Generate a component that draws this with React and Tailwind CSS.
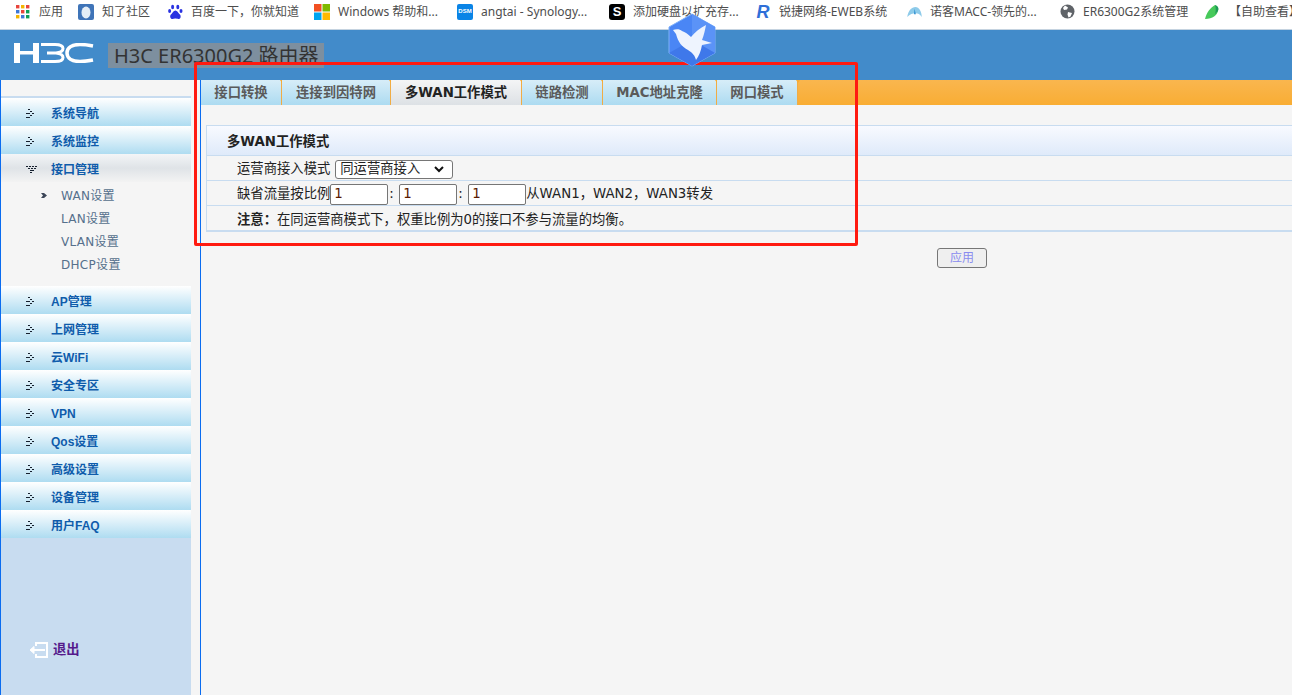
const cn = '"Liberation Sans", "Noto Sans CJK SC", sans-serif'
const wide = '"DejaVu Sans", "Noto Sans CJK SC", sans-serif'
const latin = '"Noto Sans", "Noto Sans CJK SC", sans-serif'

const closedDots = [[2, 0], [4, 2], [0, 4], [2, 4], [6, 4], [4, 6], [2, 8], [0, 8]]
const openDots = [[0, 1], [3, 1], [6, 1], [9, 1], [2, 3], [5, 3], [8, 3], [4, 5], [6, 5], [4, 7]]

function Dots({ open }) {
  const dots = open ? openDots : closedDots
  return (
    <svg width="11" height="10" viewBox="0 0 11 10" className="shrink-0" shapeRendering="crispEdges">
      {dots.map(([x, y], i) => (
        <rect key={i} x={x} y={y} width="2" height="1" fill="#16202e" />
      ))}
    </svg>
  )
}

function NavItem({ label, open }) {
  return (
    <div
      className={`flex h-[28px] items-center pl-[25px] pt-[4px] ${
        open
          ? "bg-gradient-to-b from-[#f3f5f7] via-[#dfe3e7] to-[#f3f3f3]"
          : "bg-gradient-to-b from-[#ffffff] to-[#aedcf1]"
      }`}
    >
      <Dots open={open} />
      <span className="ml-[14px] text-[12px] font-bold text-[#0f5cab]">{label}</span>
    </div>
  )
}

function Bookmark({ icon, label, w }) {
  return (
    <div className="flex shrink-0 items-center gap-[8px]" style={{ width: w }}>
      <div className="flex h-[16px] w-[16px] shrink-0 items-center justify-center">{icon}</div>
      <span className="whitespace-nowrap text-[12px] text-[#4d4d4d]" style={{ fontFamily: latin }}>
        {label}
      </span>
    </div>
  )
}

function GridIcon() {
  const colors = ["#e8453c", "#f4b400", "#e8453c", "#3c78d8", "#e8453c", "#0f9d58", "#f4b400", "#3c78d8", "#0f9d58"]
  return (
    <svg width="14" height="14" viewBox="0 0 14 14">
      {colors.map((c, i) => (
        <rect key={i} x={(i % 3) * 5} y={Math.floor(i / 3) * 5} width="3.4" height="3.4" fill={c} />
      ))}
    </svg>
  )
}

function BookmarkBar() {
  return (
    <div className="flex h-[30px] shrink-0 items-center border-b border-[#c5d3e0] bg-white pb-[6px] pl-[15px]">
      <Bookmark w={63} icon={<GridIcon />} label="应用" />
      <Bookmark
        w={89}
        label="知了社区"
        icon={
          <svg width="16" height="16" viewBox="0 0 16 16">
            <rect width="16" height="16" rx="2" fill="#3f74b8" />
            <ellipse cx="8" cy="8.5" rx="4.5" ry="6" fill="#e6eef6" />
          </svg>
        }
      />
      <Bookmark
        w={147}
        label="百度一下，你就知道"
        icon={
          <svg width="15" height="16" viewBox="0 0 15 16" fill="#2932e1">
            <ellipse cx="4.6" cy="3" rx="1.5" ry="2.3" />
            <ellipse cx="9.8" cy="3" rx="1.5" ry="2.3" />
            <ellipse cx="1.6" cy="7" rx="1.5" ry="2" />
            <ellipse cx="13" cy="7" rx="1.5" ry="2" />
            <path d="M7.4 6.5c-2 0-2.5 2.4-4.2 3.7C1.500 11.500 2 15 4.600 15c1.200 0 1.800-.4 2.800-.4s1.700.4 3 .4c2.500 0 3-3.400 1.200-4.800C9.900 8.900 9.400 6.500 7.400 6.500z" />
          </svg>
        }
      />
      <Bookmark
        w={143}
        label="Windows 帮助和..."
        icon={
          <svg width="16" height="16" viewBox="0 0 16 16">
            <rect width="7.5" height="7.5" fill="#f25022" />
            <rect x="8.5" width="7.5" height="7.5" fill="#7fba00" />
            <rect y="8.5" width="7.5" height="7.5" fill="#00a4ef" />
            <rect x="8.5" y="8.5" width="7.5" height="7.5" fill="#ffb900" />
          </svg>
        }
      />
      <Bookmark
        w={152}
        label="angtai - Synology..."
        icon={
          <div className="flex h-[16px] w-[16px] items-center justify-center rounded-[2px] bg-[#0a84e6] text-[6px] font-bold text-white">
            DSM
          </div>
        }
      />
      <Bookmark
        w={146}
        label="添加硬盘以扩充存..."
        icon={
          <div className="flex h-[16px] w-[16px] items-center justify-center rounded-[3px] bg-black text-[13px] font-bold text-white">
            S
          </div>
        }
      />
      <Bookmark
        w={151}
        label="锐捷网络-EWEB系统"
        icon={<span className="text-[18px] font-black italic leading-none text-[#2f6fd8]">R</span>}
      />
      <Bookmark
        w={153}
        label="诺客MACC-领先的..."
        icon={
          <svg width="15" height="10" viewBox="0 0 16 11">
            <path d="M0 11C1 4 5 0 9 0s7 5 7 11c-2-3-4-4-7-4s-6 1-9 4z" fill="#8ecbea" />
            <path d="M8 2l1.500 6h-2z" fill="#2f8fd0" />
          </svg>
        }
      />
      <Bookmark
        w={146}
        label="ER6300G2系统管理"
        icon={
          <svg width="15" height="15" viewBox="0 0 15 15">
            <circle cx="7.5" cy="7.5" r="7" fill="#5f6368" />
            <path d="M5 1.500l3 2-1 2-3 .5-1-2zM8 8l4 1-1.500 3.500-2 1-1-3z" fill="#fff" />
          </svg>
        }
      />
      <Bookmark
        w={100}
        label="【自助查看】"
        icon={
          <svg width="16" height="16" viewBox="0 0 16 16">
            <path d="M0 15C2 8 5 4 10 1c3 1 4 3 3 6-1 4-5 8-13 8z" fill="#46c95a" />
            <path d="M10 1c3 1 4 3 3 6l-3 3c1-3 1-6 0-9z" fill="#1f9a58" />
          </svg>
        }
      />
    </div>
  )
}

function H3CLogo() {
  return (
    <svg width="81" height="20" viewBox="0 0 81 20" className="mb-[5px] shrink-0" fill="#fff">
      <rect x="1" y="0" width="6" height="20" />
      <rect x="20" y="0" width="6" height="20" />
      <rect x="7" y="8" width="13" height="3.500" />
      <path
        fill="none"
        stroke="#fff"
        strokeWidth="3"
        d="M28 1.500h14c6 0 8 1.500 8 4s-2 4-7 4.500M34 10h9c5 .5 7 2 7 4.500s-2 4-8 4H28"
      />
      <path
        fill="none"
        stroke="#fff"
        strokeWidth="3.500"
        d="M80 3c-5-1-9-1.500-13-1.500-8 0-13 3-13 8.500s5 8.500 13 8.500c4 0 8-.5 13-1.500"
      />
    </svg>
  )
}

function HeaderBar() {
  return (
    <div className="flex h-[50px] shrink-0 items-center bg-[#428bca] pl-[13px]">
      <H3CLogo />
      <div
        className="ml-[14px] mt-[1px] flex h-[25px] w-[216px] items-center bg-[#7d8f9f] pl-[6px] text-[20px] leading-none whitespace-nowrap text-[#333]"
        style={{ fontFamily: latin }}
      >
        H3C ER6300G2 路由器
      </div>
    </div>
  )
}

const navTop = ["系统导航", "系统监控"]
const navBottom = ["AP管理", "上网管理", "云WiFi", "安全专区", "VPN", "Qos设置", "高级设置", "设备管理", "用户FAQ"]
const subItems = ["WAN设置", "LAN设置", "VLAN设置", "DHCP设置"]

function Sidebar() {
  return (
    <div className="flex w-[191px] shrink-0 flex-col border-l border-[#0a6cf0]">
      <div className="h-[16px] shrink-0" />
      <div className="h-[2px] shrink-0 bg-[#c8dcf0]" />
      {navTop.map((n) => (
        <NavItem key={n} label={n} />
      ))}
      <NavItem label="接口管理" open />
      <div className="flex h-[104px] shrink-0 flex-col pt-[2px]">
        {subItems.map((s, i) => (
          <div key={s} className="flex h-[23px] items-center">
            <div className="flex w-[60px] justify-end pr-[13px]">
              {i === 0 && (
                <svg width="7" height="7" viewBox="0 0 7 7">
                  <path d="M0 1h3l3 2.500-3 2.500H0l2-2.500z" fill="#3c4658" />
                </svg>
              )}
            </div>
            <span className="text-[12px] tracking-[0.3px] text-[#56708c]" style={{ fontFamily: wide }}>
              {s}
            </span>
          </div>
        ))}
      </div>
      {navBottom.map((n) => (
        <NavItem key={n} label={n} />
      ))}
      <div className="flex-1 bg-[#c8dcf0] pl-[28px] pt-[102px]">
        <div className="flex items-center gap-[4px]">
          <svg width="20" height="16" viewBox="0 0 20 16" fill="none" stroke="#fff" strokeWidth="2">
            <path d="M7 4V1h11v14H7v-3" />
            <path d="M16 8H5" />
            <path d="M5 4.500v7L1 8z" fill="#fff" strokeWidth="1" />
          </svg>
          <span className="text-[13.33px] font-bold text-[#551a8b]">退出</span>
        </div>
      </div>
    </div>
  )
}

const tabs = [
  { label: "接口转换", w: 81 },
  { label: "连接到因特网", w: 109 },
  { label: "多WAN工作模式", w: 131, active: true },
  { label: "链路检测", w: 81 },
  { label: "MAC地址克隆", w: 114 },
  { label: "网口模式", w: 81 },
]

function TabBar() {
  return (
    <div className="flex h-[25px] shrink-0 bg-gradient-to-b from-[#f9b64e] to-[#f9ad33]">
      {tabs.map((t) => (
        <div
          key={t.label}
          style={{ width: t.w, fontFamily: wide }}
          className={`relative flex items-center justify-center border-r border-[#f0ac45] text-[13.33px] font-bold ${
            t.active
              ? "bg-gradient-to-b from-[#f4f5f6] to-[#dde1e5] text-[#222]"
              : "bg-gradient-to-b from-[#d7edf8] to-[#acdbf1] text-[#5a5a5a]"
          }`}
        >
          {t.label}
          <div className="absolute -right-[3px] top-0 h-0 w-0 border-x-[2.5px] border-t-[3px] border-x-transparent border-t-[#f9ad33]" />
        </div>
      ))}
    </div>
  )
}

function NumInput() {
  return (
    <div className="flex h-[21px] w-[58px] shrink-0 items-center rounded-[2px] border border-[#767676] bg-white pl-[3px] text-[13.33px] text-[#5a1a00]">
      1
    </div>
  )
}

function Row({ children }) {
  return <div className="flex h-[25px] items-center border-b border-[#c8dcf0] pl-[30px] pt-[2px]">{children}</div>
}

function Content() {
  return (
    <div className="ml-[9px] flex flex-1 flex-col border-l border-[#0a6cf0]">
      <TabBar />
      <div className="pl-[5px] pt-[20px]" style={{ fontFamily: wide }}>
        <div className="border-b-[2px] border-l border-t border-[#c8dcf0] text-[13.33px] text-[#222]">
          <div className="flex h-[30px] items-center border-b border-[#c8dcf0] bg-gradient-to-b from-[#f8faff] to-[#dfeafa] pl-[20px] pt-[2px] font-bold">
            多WAN工作模式
          </div>
          <Row>
            <span>运营商接入模式</span>
            <div className="ml-[5px] flex h-[19px] w-[118px] items-center justify-between rounded-[3px] border border-[#767676] bg-white pl-[4px] pr-[8px]">
              <span>同运营商接入</span>
              <svg width="10" height="7" viewBox="0 0 10 7" fill="none" stroke="#111" strokeWidth="2">
                <path d="M1 1l4 4 4-4" />
              </svg>
            </div>
          </Row>
          <Row>
            <span>缺省流量按比例</span>
            <NumInput />
            <span className="w-[11px] pl-[1px] text-left">:</span>
            <NumInput />
            <span className="w-[11px] pl-[1px] text-left">:</span>
            <NumInput />
            <span>从WAN1，WAN2，WAN3转发</span>
          </Row>
          <div className="flex h-[24px] items-center pl-[30px] pt-[3px]">
            <span className="font-bold">注意：</span>
            <span>在同运营商模式下，权重比例为0的接口不参与流量的均衡。</span>
          </div>
        </div>
      </div>
      <div className="ml-[736px] mt-[16px] flex h-[20px] w-[50px] items-center justify-center rounded-[3px] border border-[#767676] bg-[#efefef] text-[12px] text-[#8a8cf0]">
        应用
      </div>
    </div>
  )
}

export default function App() {
  return (
    <div
      className="relative flex h-[695px] w-full flex-col overflow-hidden bg-[#f5f5f5]"
      style={{ fontFamily: cn }}
    >
      <BookmarkBar />
      <HeaderBar />
      <div className="flex min-h-0 flex-1">
        <Sidebar />
        <Content />
      </div>
      {/* annotation drawn over the shot */}
      <div className="absolute left-[194px] top-[62px] h-[184px] w-[664px] rounded-[2px] border-[3px] border-[#ff1a10]" />
      <svg width="50" height="54" viewBox="0 0 50 54" className="absolute left-[667px] top-[13px]">
        <path d="M25 1l23 13v26L25 53 2 40V14z" fill="#4a86f5" stroke="#7eb0fa" strokeWidth="1" strokeLinejoin="round" />
        <path d="M25 1l23 13v26L25 27z" fill="#5b93f7" />
        <path d="M25 27L2 40l23 13 23-13z" fill="#3f78ea" />
        <path d="M6 17c3-1 7-1 9 1 3 1 6 3 9 6 4-5 9-9 15-12-1 5-2 10-4 15l10 3-10 2c-1 6-3 11-6 15-1-4-3-7-8-10-6-3-10-8-12-16-1-1-2-3-3-4z" fill="#eef4fe" />
      </svg>
    </div>
  )
}
